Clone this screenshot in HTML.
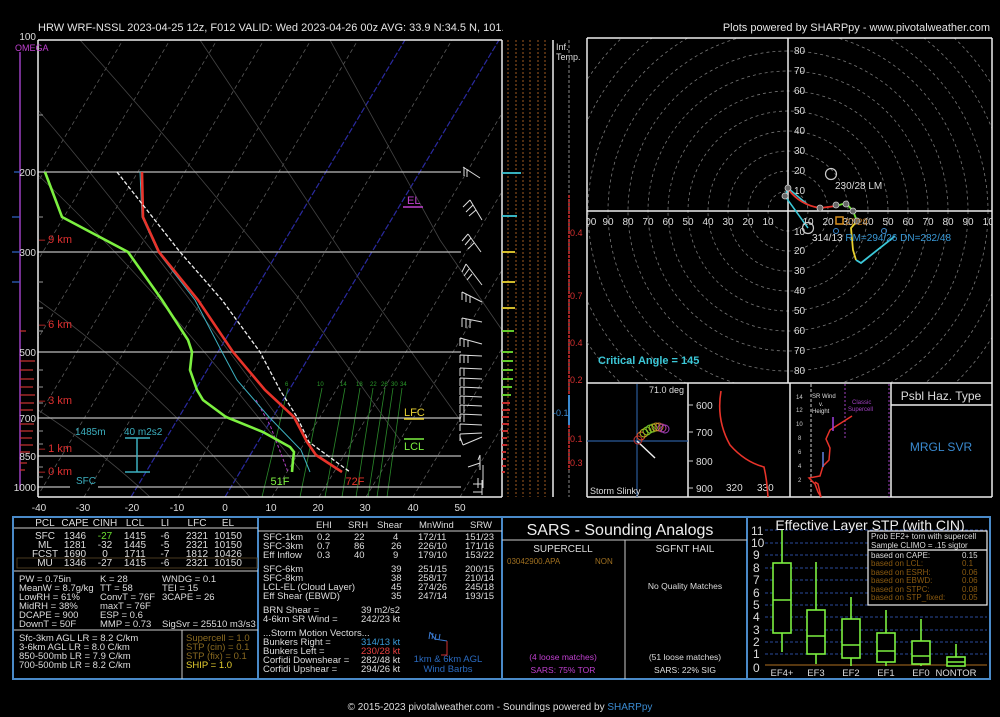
<!DOCTYPE html>
<html><head><meta charset="utf-8"><style>
html,body{margin:0;padding:0;background:#000;}
svg{display:block;font-family:"Liberation Sans",sans-serif;}
</style></head><body>
<svg width="1000" height="717" viewBox="0 0 1000 717" xmlns="http://www.w3.org/2000/svg">
<rect width="1000" height="717" fill="#000"/>
<text x="38" y="31" fill="#e4e4e4" font-size="11" font-weight="500">HRW WRF-NSSL 2023-04-25 12z, F012  VALID: Wed 2023-04-26 00z  AVG: 33.9 N:34.5 N, 101.2</text>
<rect x="503" y="18" width="90" height="16" fill="#000"/>
<text x="990" y="31" fill="#e4e4e4" font-size="11" text-anchor="end">Plots powered by SHARPpy - www.pivotalweather.com</text>

<defs><clipPath id="sk"><rect x="38" y="40" width="464" height="457"/></clipPath>
<clipPath id="hd"><rect x="587" y="38" width="405" height="345"/></clipPath></defs>
<g clip-path="url(#sk)">
 <g stroke="#5a5a5a" stroke-width="0.8" stroke-dasharray="4,3" fill="none">
  <line x1="-10" y1="497" x2="264" y2="40"/><line x1="37" y1="497" x2="311" y2="40"/>
  <line x1="84" y1="497" x2="358" y2="40"/><line x1="178" y1="497" x2="452" y2="40"/>
  <line x1="272" y1="497" x2="546" y2="40"/><line x1="319" y1="497" x2="593" y2="40"/>
  <line x1="366" y1="497" x2="640" y2="40"/><line x1="413" y1="497" x2="687" y2="40"/>
  <line x1="460" y1="497" x2="734" y2="40"/><line x1="-57" y1="497" x2="217" y2="40"/>
  <line x1="-104" y1="497" x2="170" y2="40"/><line x1="-151" y1="497" x2="123" y2="40"/>
 </g>
 <g stroke="#2a2aa0" stroke-width="1.2" stroke-dasharray="6,2" fill="none">
  <line x1="131" y1="497" x2="405" y2="40"/><line x1="225" y1="497" x2="499" y2="40"/>
 </g>
 <g stroke="#444" stroke-width="0.8" fill="none">
  <path d="M38,110 Q140,230 280,420"/><path d="M38,175 Q160,290 300,470"/>
  <path d="M38,300 Q150,380 250,497"/><path d="M38,410 Q100,450 150,497"/>
  <path d="M80,40 Q180,150 300,300 L400,440"/><path d="M200,40 Q280,160 360,280 L460,420"/>
  <path d="M330,40 Q390,150 440,240 L502,330"/>
 </g>
 <g stroke="#2a8a2a" stroke-width="0.8" fill="none">
  <line x1="288" y1="388" x2="262" y2="497"/><line x1="322" y1="388" x2="300" y2="497"/>
  <line x1="345" y1="388" x2="325" y2="497"/><line x1="360" y1="388" x2="342" y2="497"/>
  <line x1="373" y1="388" x2="356" y2="497"/><line x1="385" y1="388" x2="368" y2="497"/>
  <line x1="393" y1="388" x2="377" y2="497"/><line x1="402" y1="388" x2="387" y2="497"/>
 </g>
 <g fill="#2a9a2a" font-size="6">
  <text x="285" y="386">6</text><text x="317" y="386">10</text><text x="340" y="386">14</text><text x="356" y="386">18</text><text x="370" y="386">22</text><text x="381" y="386">26</text><text x="391" y="386">30</text><text x="400" y="386">34</text>
 </g>
</g>
<g stroke="#bbb" stroke-width="1.3">
 <line x1="38" y1="172" x2="461" y2="172"/><line x1="38" y1="252" x2="461" y2="252"/>
 <line x1="38" y1="352" x2="461" y2="352"/><line x1="38" y1="418" x2="461" y2="418"/>
 <line x1="38" y1="456" x2="461" y2="456"/><line x1="38" y1="487" x2="70" y2="487"/><line x1="98" y1="487" x2="461" y2="487"/>
</g>
<line x1="38" y1="40" x2="502" y2="40" stroke="#eee" stroke-width="1.5"/>
<line x1="38" y1="40" x2="38" y2="497" stroke="#eee" stroke-width="1.5"/>
<line x1="38" y1="497" x2="502" y2="497" stroke="#eee" stroke-width="1.5"/>
<line x1="502" y1="40" x2="502" y2="497" stroke="#eee" stroke-width="1.5"/>
<g stroke="#999" stroke-width="1"><line x1="38" y1="115" x2="43" y2="115"/><line x1="38" y1="217" x2="43" y2="217"/><line x1="38" y1="282" x2="43" y2="282"/><line x1="38" y1="308" x2="43" y2="308"/><line x1="38" y1="331" x2="43" y2="331"/><line x1="38" y1="370" x2="43" y2="370"/><line x1="38" y1="387" x2="43" y2="387"/><line x1="38" y1="403" x2="43" y2="403"/><line x1="38" y1="431" x2="43" y2="431"/><line x1="38" y1="444" x2="43" y2="444"/><line x1="38" y1="467" x2="43" y2="467"/><line x1="38" y1="477" x2="43" y2="477"/></g>
<line x1="20" y1="52" x2="20" y2="490" stroke="#9a3fbf" stroke-width="1.5"/>
<text x="15" y="51" fill="#c040d0" font-size="9">OMEGA</text>
<g stroke="#c33" stroke-width="1.2">
 <line x1="20" y1="331" x2="26" y2="331"/>
 <line x1="20" y1="361" x2="35" y2="361"/><line x1="20" y1="370" x2="33" y2="370"/><line x1="20" y1="379" x2="34" y2="379"/><line x1="20" y1="387" x2="33" y2="387"/><line x1="20" y1="395" x2="35" y2="395"/><line x1="20" y1="403" x2="34" y2="403"/><line x1="20" y1="410" x2="33" y2="410"/><line x1="20" y1="424" x2="34" y2="424"/><line x1="20" y1="431" x2="33" y2="431"/><line x1="20" y1="438" x2="32" y2="438"/><line x1="20" y1="445" x2="33" y2="445"/><line x1="20" y1="452" x2="30" y2="452"/><line x1="20" y1="463" x2="27" y2="463"/><line x1="20" y1="470" x2="25" y2="470"/>
</g>
<g stroke="#36c" stroke-width="1.2"><line x1="14" y1="172" x2="20" y2="172"/><line x1="12" y1="217" x2="20" y2="217"/><line x1="12" y1="252" x2="20" y2="252"/><line x1="12" y1="282" x2="20" y2="282"/></g>
<g fill="#ddd" font-size="10" text-anchor="end">
 <text x="36" y="40">100</text><text x="36" y="176">200</text><text x="36" y="256">300</text><text x="36" y="356">500</text><text x="36" y="422">700</text><text x="36" y="460">850</text><text x="36" y="491">1000</text>
</g>
<g fill="#e03030" font-size="11">
 <text x="39" y="243">– 9 km</text><text x="39" y="328">– 6 km</text><text x="39" y="404">– 3 km</text><text x="39" y="452">– 1 km</text><text x="39" y="475">– 0 km</text>
</g>
<g fill="#ddd" font-size="10" text-anchor="middle">
 <text x="39" y="511">-40</text><text x="83" y="511">-30</text><text x="132" y="511">-20</text><text x="177" y="511">-10</text><text x="225" y="511">0</text><text x="271" y="511">10</text><text x="318" y="511">20</text><text x="365" y="511">30</text><text x="413" y="511">40</text><text x="460" y="511">50</text>
</g>
<polyline points="256,400 270,425 288,472" stroke="#b040c0" stroke-width="1" stroke-dasharray="3,2" fill="none"/>
<polyline points="140,172 142,217 158,252 195,300 222,352 237,380 269,417 301,450 310,472" stroke="#3cb0c0" stroke-width="1" fill="none"/>
<polyline points="142,172 143,217 159,252 198,300 233,352 265,390 294,417 307,442 316,455 342,472" stroke="#e8332a" stroke-width="2.6" fill="none"/>
<polyline points="117,172 180,252 222,300 260,352 280,390 297,417 309,442 350,472" stroke="#eee" stroke-width="1.3" stroke-dasharray="4,2" fill="none"/>
<polyline points="45,172 62,217 128,252 162,300 188,340 192,352 190,370 197,390 203,400 226,417 263,432 290,447 294,452 293,460 292,472" stroke="#7cf040" stroke-width="2.6" fill="none"/>
<text x="280" y="485" fill="#7cf040" font-size="11" text-anchor="middle">51F</text>
<text x="355" y="485" fill="#e8332a" font-size="11" text-anchor="middle">72F</text>
<text x="75" y="435" fill="#3cb0c0" font-size="10">1485m</text>
<text x="124" y="435" fill="#3cb0c0" font-size="10">40 m2s2</text>
<g stroke="#3cb0c0" stroke-width="1.5"><line x1="125" y1="438" x2="150" y2="438"/><line x1="137" y1="438" x2="137" y2="472"/><line x1="125" y1="472" x2="150" y2="472"/></g>
<text x="76" y="484" fill="#3cb0c0" font-size="10">SFC</text>
<text x="404" y="416" fill="#e8d030" font-size="11">LFC</text><line x1="404" y1="419" x2="424" y2="419" stroke="#e8d030" stroke-width="1.5"/>
<line x1="404" y1="439" x2="424" y2="439" stroke="#7cf040" stroke-width="1.5"/><text x="404" y="450" fill="#7cf040" font-size="11">LCL</text>
<text x="407" y="204" fill="#c040d0" font-size="11">EL</text><line x1="403" y1="207" x2="423" y2="207" stroke="#c040d0" stroke-width="1.5"/>
<g stroke="#ddd" stroke-width="1" fill="none">
 <path d="M463,167 L480,178 M464,167 L464,176 M467,169 L467,177"/>
 <path d="M470,200 L482,220 M470,200 L463,207 M473,205 L466,212 M476,210 L469,216"/>
 <path d="M468,234 L481,252 M468,234 L462,241 M471,238 L465,245 M474,243 L468,249"/>
 <path d="M466,264 L482,285 M466,264 L462,272 M469,269 L464,276 M472,274 L467,280"/>
 <path d="M462,292 L482,302 M462,292 L462,300 M466,294 L466,302 M470,296 L470,303"/>
 <path d="M462,318 L482,322 M462,318 L462,327 M466,319 L466,328 M470,320 L470,328"/>
 <path d="M460,338 L482,344 M460,338 L460,346 M464,339 L464,347 M468,340 L468,347"/>
 <path d="M460,355 L482,356 M460,355 L460,363 M464,355 L464,363 M468,355 L468,363"/>
 <path d="M460,368 L482,369 M460,368 L460,376 M464,368 L464,376"/>
 <path d="M460,378 L482,379 M460,378 L460,386 M464,378 L464,386"/>
 <path d="M460,387 L482,388 M460,387 L460,395 M464,387 L464,395"/>
 <path d="M460,396 L482,397 M460,396 L460,404 M464,396 L464,404"/>
 <path d="M460,405 L482,406 M460,405 L460,413 M464,405 L464,413"/>
 <path d="M460,414 L482,415 M460,414 L460,422 M464,414 L464,422"/>
 <path d="M460,424 L482,425 M460,424 L460,431"/>
 <path d="M460,434 L482,433 M460,434 L460,441"/>
 <path d="M463,445 L482,437 M463,445 L460,437"/>
 <path d="M480,455 L480,470 M480,455 L478,460 M468,467 L480,463"/>
 <path d="M483,465 L483,488 M473,484 L483,484 M478,478 L478,488"/>
 <path d="M482,480 L482,495 M473,492 L482,492"/>
</g>
<g stroke="#a05a20" stroke-width="1" stroke-dasharray="2,2">
 <line x1="508" y1="40" x2="508" y2="497"/><line x1="516" y1="40" x2="516" y2="497"/><line x1="523" y1="40" x2="523" y2="497"/><line x1="530" y1="40" x2="530" y2="497"/><line x1="538" y1="40" x2="538" y2="497"/><line x1="545" y1="40" x2="545" y2="497"/>
</g>
<g stroke-width="1.8">
 <line x1="502" y1="173" x2="521" y2="173" stroke="#3cc8d8"/><line x1="502" y1="216" x2="517" y2="216" stroke="#3cc8d8"/>
 <line x1="502" y1="252" x2="515" y2="252" stroke="#e8d030"/><line x1="502" y1="282" x2="515" y2="282" stroke="#e8d030"/><line x1="502" y1="308" x2="515" y2="308" stroke="#e8d030"/>
 <line x1="502" y1="331" x2="514" y2="331" stroke="#6ce030"/><line x1="502" y1="352" x2="513" y2="352" stroke="#6ce030"/><line x1="502" y1="361" x2="513" y2="361" stroke="#6ce030"/><line x1="502" y1="370" x2="513" y2="370" stroke="#6ce030"/><line x1="502" y1="379" x2="513" y2="379" stroke="#6ce030"/><line x1="502" y1="387" x2="512" y2="387" stroke="#6ce030"/><line x1="502" y1="395" x2="511" y2="395" stroke="#6ce030"/>
 <g stroke="#d83030"><line x1="502" y1="403" x2="510" y2="403"/><line x1="502" y1="410" x2="510" y2="410"/><line x1="502" y1="417" x2="509" y2="417"/><line x1="502" y1="424" x2="509" y2="424"/><line x1="502" y1="431" x2="508" y2="431"/><line x1="502" y1="438" x2="507" y2="438"/><line x1="502" y1="445" x2="507" y2="445"/><line x1="502" y1="452" x2="506" y2="452"/><line x1="502" y1="459" x2="506" y2="459"/><line x1="502" y1="466" x2="506" y2="466"/><line x1="502" y1="472" x2="505" y2="472"/></g>
</g>
<line x1="553" y1="40" x2="553" y2="497" stroke="#eee" stroke-width="1.5"/>
<text x="556" y="50" fill="#ddd" font-size="9">Inf.</text><text x="556" y="60" fill="#ddd" font-size="9">Temp.</text>
<line x1="569" y1="40" x2="569" y2="497" stroke="#888" stroke-width="1" stroke-dasharray="3,2"/>
<line x1="569" y1="195" x2="569" y2="395" stroke="#d83030" stroke-width="1.5" stroke-dasharray="3,1"/>
<line x1="569" y1="395" x2="569" y2="425" stroke="#3a8ad0" stroke-width="2"/>
<line x1="569" y1="425" x2="569" y2="470" stroke="#d83030" stroke-width="1.5" stroke-dasharray="3,1"/>
<g fill="#d83030" font-size="9"><text x="570" y="236">0.4</text><text x="570" y="299">0.7</text><text x="570" y="346">0.4</text><text x="570" y="383">0.2</text><text x="570" y="442">0.1</text><text x="570" y="466">0.3</text></g>
<text x="553" y="416" fill="#3a8ad0" font-size="9">-0.1</text>
<line x1="587" y1="38" x2="587" y2="497" stroke="#eee" stroke-width="1.5"/>

<g clip-path="url(#hd)">
 <g stroke="#777" stroke-width="0.8" stroke-dasharray="3,3" fill="none">
  <circle cx="788" cy="211" r="20"/><circle cx="788" cy="211" r="40"/><circle cx="788" cy="211" r="60"/><circle cx="788" cy="211" r="80"/><circle cx="788" cy="211" r="100"/><circle cx="788" cy="211" r="120"/><circle cx="788" cy="211" r="140"/><circle cx="788" cy="211" r="160"/><circle cx="788" cy="211" r="180"/><circle cx="788" cy="211" r="200"/><circle cx="788" cy="211" r="220"/><circle cx="788" cy="211" r="240"/>
 </g>
 <line x1="587" y1="211" x2="992" y2="211" stroke="#eee" stroke-width="1.5"/>
 <line x1="788" y1="38" x2="788" y2="383" stroke="#eee" stroke-width="1.5"/>
 <g fill="#ddd" font-size="10" text-anchor="middle">
  <text x="588" y="225">100</text><text x="608" y="225">90</text><text x="628" y="225">80</text><text x="648" y="225">70</text><text x="668" y="225">60</text><text x="688" y="225">50</text><text x="708" y="225">40</text><text x="728" y="225">30</text><text x="748" y="225">20</text><text x="768" y="225">10</text>
  <text x="808" y="225">10</text><text x="828" y="225">20</text><text x="848" y="225">30</text><text x="868" y="225">40</text><text x="888" y="225">50</text><text x="908" y="225">60</text><text x="928" y="225">70</text><text x="948" y="225">80</text><text x="968" y="225">90</text><text x="991" y="225">100</text>
 </g>
 <g fill="#ddd" font-size="10">
  <text x="794" y="54">80</text><text x="794" y="74">70</text><text x="794" y="94">60</text><text x="794" y="114">50</text><text x="794" y="134">40</text><text x="794" y="154">30</text><text x="794" y="174">20</text><text x="794" y="194">10</text>
  <text x="794" y="235">10</text><text x="794" y="254">20</text><text x="794" y="274">30</text><text x="794" y="294">40</text><text x="794" y="314">50</text><text x="794" y="334">60</text><text x="794" y="354">70</text><text x="794" y="374">80</text>
 </g>
</g>
<line x1="587" y1="38" x2="992" y2="38" stroke="#eee" stroke-width="1.5"/>
<line x1="992" y1="38" x2="992" y2="497" stroke="#eee" stroke-width="1.5"/>
<line x1="587" y1="383" x2="992" y2="383" stroke="#eee" stroke-width="1.5"/>
<polyline points="785,196 788,188 808,205" stroke="#3cc8d8" stroke-width="1.5" fill="none"/>
<line x1="785" y1="196" x2="808" y2="228" stroke="#3cc8d8" stroke-width="1.5"/>
<path d="M786,187 L788,189 Q800,205 820,208 L836,206" stroke="#e8332a" stroke-width="1.8" fill="none"/>
<polyline points="836,206 846,203 853,211 857,221" stroke="#6ce030" stroke-width="1.8" fill="none"/>
<polyline points="857,221 851,228 853,250 856,260" stroke="#e8d030" stroke-width="1.8" fill="none"/>
<polyline points="856,260 861,263 895,236" stroke="#3cc8d8" stroke-width="1.8" fill="none"/>
<g fill="#666" stroke="#ccc" stroke-width="0.8">
 <circle cx="788" cy="188" r="3"/><circle cx="785" cy="196" r="3"/><circle cx="820" cy="208" r="3"/><circle cx="836" cy="205" r="3"/><circle cx="846" cy="204" r="3"/><circle cx="853" cy="211" r="3"/><circle cx="857" cy="221" r="3"/>
</g>
<circle cx="831" cy="174" r="5.5" stroke="#ccc" stroke-width="1.2" fill="none"/>
<circle cx="808" cy="228" r="5.5" stroke="#ccc" stroke-width="1.2" fill="none"/>
<rect x="836" y="217" width="7" height="7" stroke="#d89020" stroke-width="1.5" fill="none"/>
<text x="845" y="225" fill="#b07020" font-size="9">27/29</text>
<circle cx="836" cy="231" r="2.5" stroke="#3a8ad0" fill="none"/><circle cx="884" cy="231" r="2.5" stroke="#3a8ad0" fill="none"/>
<text x="835" y="189" fill="#ddd" font-size="10">230/28 LM</text>
<text x="812" y="241" fill="#ddd" font-size="10">314/13 <tspan fill="#3a9ad8">RM=294/26  DN=282/48</tspan></text>
<text x="598" y="364" fill="#3cc8d8" font-size="11" font-weight="bold">Critical Angle = 145</text>

<line x1="688" y1="383" x2="688" y2="497" stroke="#eee" stroke-width="1.5"/>
<line x1="790" y1="383" x2="790" y2="497" stroke="#eee" stroke-width="1.5"/>
<line x1="891" y1="383" x2="891" y2="497" stroke="#eee" stroke-width="1.5"/>
<line x1="587" y1="497" x2="992" y2="497" stroke="#eee" stroke-width="1.5"/>
<line x1="637" y1="384" x2="637" y2="497" stroke="#2a5a9a" stroke-width="1.2"/>
<line x1="587" y1="441" x2="688" y2="441" stroke="#2a5a9a" stroke-width="1.2"/>
<line x1="637" y1="441" x2="655" y2="458" stroke="#eee" stroke-width="1.5"/>
<g fill="none" stroke-width="1">
 <circle cx="638" cy="440" r="4" stroke="#c03030"/><circle cx="641" cy="436" r="4" stroke="#e05030"/><circle cx="644" cy="433" r="4" stroke="#c0c020"/><circle cx="647" cy="431" r="4" stroke="#90d020"/><circle cx="650" cy="429" r="4" stroke="#70d030"/><circle cx="653" cy="428" r="4" stroke="#90c020"/><circle cx="656" cy="427" r="4" stroke="#c0a020"/><circle cx="659" cy="427" r="4" stroke="#d08030"/><circle cx="662" cy="428" r="4" stroke="#c040a0"/><circle cx="665" cy="429" r="4" stroke="#a040c0"/>
</g>
<text x="649" y="393" fill="#ddd" font-size="9">71.0 deg</text>
<text x="590" y="494" fill="#ddd" font-size="9">Storm Slinky</text>
<g stroke="#ccc" stroke-width="1"><line x1="688" y1="405" x2="693" y2="405"/><line x1="688" y1="432" x2="693" y2="432"/><line x1="688" y1="461" x2="693" y2="461"/><line x1="688" y1="488" x2="693" y2="488"/></g>
<g fill="#ddd" font-size="10"><text x="696" y="409">600</text><text x="696" y="436">700</text><text x="696" y="465">800</text><text x="696" y="492">900</text><text x="726" y="491">320</text><text x="757" y="491">330</text></g>
<path d="M721,391 Q716,420 730,445 Q745,462 764,467 Q767,480 768,497" stroke="#e8332a" stroke-width="1.6" fill="none"/>
<line x1="811" y1="384" x2="811" y2="497" stroke="#ccc" stroke-width="1" stroke-dasharray="3,2"/>
<line x1="845" y1="384" x2="845" y2="440" stroke="#a040c0" stroke-width="1" stroke-dasharray="2,2"/>
<line x1="889" y1="384" x2="889" y2="497" stroke="#a040c0" stroke-width="1" stroke-dasharray="2,2"/>
<g fill="#ccc" font-size="6"><text x="796" y="399">14</text><text x="796" y="412">12</text><text x="796" y="426">10</text><text x="798" y="440">8</text><text x="798" y="454">6</text><text x="798" y="468">4</text><text x="798" y="482">2</text></g>
<g fill="#ddd" font-size="6"><text x="812" y="398">SR Wind</text><text x="819" y="406">v.</text><text x="812" y="413">Height</text></g>
<g fill="#a040c0" font-size="6"><text x="852" y="404">Classic</text><text x="848" y="411">Supercell</text></g>
<polyline points="852,416 830,430 826,439 830,448 829,460 823,466 820,476 809,478 815,484 818,492 821,497 818,484 815,482" stroke="#e8332a" stroke-width="1.5" fill="none"/>
<line x1="833" y1="417" x2="833" y2="431" stroke="#a040e0" stroke-width="1.5"/>
<line x1="823" y1="452" x2="823" y2="467" stroke="#6080e0" stroke-width="1.5"/>
<text x="941" y="400" fill="#ddd" font-size="12" text-anchor="middle">Psbl Haz. Type</text>
<line x1="891" y1="405" x2="992" y2="405" stroke="#eee" stroke-width="1.5"/>
<text x="941" y="451" fill="#3a8ad0" font-size="12" text-anchor="middle">MRGL SVR</text>

<rect x="13" y="517" width="977" height="162" fill="none" stroke="#4a8ac8" stroke-width="2"/>
<line x1="258" y1="517" x2="258" y2="679" stroke="#4a8ac8" stroke-width="2"/>
<line x1="502" y1="517" x2="502" y2="679" stroke="#4a8ac8" stroke-width="2"/>
<line x1="747" y1="517" x2="747" y2="679" stroke="#4a8ac8" stroke-width="2"/>
<g stroke="#ccc" stroke-width="1">
 <line x1="14" y1="528" x2="258" y2="528"/><line x1="14" y1="571" x2="258" y2="571"/><line x1="14" y1="630" x2="258" y2="630"/><line x1="182" y1="630" x2="182" y2="679"/>
 <line x1="258" y1="531" x2="502" y2="531"/><line x1="502" y1="540" x2="747" y2="540"/><line x1="625" y1="540" x2="625" y2="679"/>
</g>
<rect x="17" y="558" width="240" height="10" fill="none" stroke="#4a3a20" stroke-width="1"/>
<g fill="#ddd" font-size="10" text-anchor="middle">
 <text x="45" y="526">PCL</text><text x="75" y="526">CAPE</text><text x="105" y="526">CINH</text><text x="135" y="526">LCL</text><text x="165" y="526">LI</text><text x="197" y="526">LFC</text><text x="228" y="526">EL</text>
 <text x="45" y="539">SFC</text><text x="75" y="539">1346</text><text x="105" y="539" fill="#6ce030">-27</text><text x="135" y="539">1415</text><text x="165" y="539">-6</text><text x="197" y="539">2321</text><text x="228" y="539">10150</text>
 <text x="45" y="548">ML</text><text x="75" y="548">1281</text><text x="105" y="548">-32</text><text x="135" y="548">1445</text><text x="165" y="548">-5</text><text x="197" y="548">2321</text><text x="228" y="548">10150</text>
 <text x="45" y="557">FCST</text><text x="75" y="557">1690</text><text x="105" y="557">0</text><text x="135" y="557">1711</text><text x="165" y="557">-7</text><text x="197" y="557">1812</text><text x="228" y="557">10426</text>
 <text x="45" y="566">MU</text><text x="75" y="566">1346</text><text x="105" y="566">-27</text><text x="135" y="566">1415</text><text x="165" y="566">-6</text><text x="197" y="566">2321</text><text x="228" y="566">10150</text>
</g>
<g fill="#ddd" font-size="9.5">
 <text x="19" y="582">PW = 0.75in</text><text x="19" y="591">MeanW = 8.7g/kg</text><text x="19" y="600">LowRH = 61%</text><text x="19" y="609">MidRH = 38%</text><text x="19" y="618">DCAPE = 900</text><text x="19" y="627">DownT = 50F</text>
 <text x="100" y="582">K = 28</text><text x="100" y="591">TT = 58</text><text x="100" y="600">ConvT = 76F</text><text x="100" y="609">maxT = 76F</text><text x="100" y="618">ESP = 0.6</text><text x="100" y="627">MMP = 0.73</text>
 <text x="162" y="582">WNDG = 0.1</text><text x="162" y="591">TEI = 15</text><text x="162" y="600">3CAPE = 26</text><text x="162" y="627">SigSvr = 25510 m3/s3</text>
 <text x="19" y="641">Sfc-3km AGL LR = 8.2 C/km</text><text x="19" y="650">3-6km AGL LR = 8.0 C/km</text><text x="19" y="659">850-500mb LR = 7.9 C/km</text><text x="19" y="668">700-500mb LR = 8.2 C/km</text>
 <text x="186" y="641" fill="#8a6a20">Supercell = 1.0</text><text x="186" y="650" fill="#8a6a20">STP (cin) = 0.1</text><text x="186" y="659" fill="#8a6a20">STP (fix) = 0.1</text><text x="186" y="668" fill="#e8d030">SHIP = 1.0</text>
</g>
<g fill="#ddd" font-size="9.5">
 <text x="316" y="528">EHI</text><text x="348" y="528">SRH</text><text x="377" y="528">Shear</text><text x="419" y="528">MnWind</text><text x="470" y="528">SRW</text>
 <text x="263" y="540">SFC-1km</text><text x="263" y="549">SFC-3km</text><text x="263" y="558">Eff Inflow</text>
 <text x="317" y="540">0.2</text><text x="317" y="549">0.7</text><text x="317" y="558">0.3</text>
 <text x="354" y="540">22</text><text x="354" y="549">86</text><text x="354" y="558">40</text>
 <text x="393" y="540">4</text><text x="391" y="549">26</text><text x="393" y="558">9</text>
 <text x="418" y="540">172/11</text><text x="418" y="549">226/10</text><text x="418" y="558">179/10</text>
 <text x="465" y="540">151/23</text><text x="465" y="549">171/16</text><text x="465" y="558">153/22</text>
 <text x="263" y="572">SFC-6km</text><text x="263" y="581">SFC-8km</text><text x="263" y="590">LCL-EL (Cloud Layer)</text><text x="263" y="599">Eff Shear (EBWD)</text>
 <text x="391" y="572">39</text><text x="391" y="581">38</text><text x="391" y="590">45</text><text x="391" y="599">35</text>
 <text x="418" y="572">251/15</text><text x="418" y="581">258/17</text><text x="418" y="590">274/26</text><text x="418" y="599">247/14</text>
 <text x="465" y="572">200/15</text><text x="465" y="581">210/14</text><text x="465" y="590">245/18</text><text x="465" y="599">193/15</text>
 <text x="263" y="613">BRN Shear =</text><text x="361" y="613">39 m2/s2</text>
 <text x="263" y="622">4-6km SR Wind =</text><text x="361" y="622">242/23 kt</text>
 <text x="263" y="636">...Storm Motion Vectors...</text>
 <text x="263" y="645">Bunkers Right =</text><text x="361" y="645" fill="#3a9ad8">314/13 kt</text>
 <text x="263" y="654">Bunkers Left =</text><text x="361" y="654" fill="#e84040">230/28 kt</text>
 <text x="263" y="663">Corfidi Downshear =</text><text x="361" y="663">282/48 kt</text>
 <text x="263" y="672">Corfidi Upshear =</text><text x="361" y="672">294/26 kt</text>
</g>
<g stroke-width="1" fill="none"><path d="M430,632 L435,639 L447,641 M430,632 L429,639 M433,633 L432,639 M436,634 L435,640 M440,634 L439,640" stroke="#3a7ad0"/><path d="M447,641 L447,655 L441,655" stroke="#d03030"/></g>
<g fill="#2a6ac0" font-size="9.5" text-anchor="middle"><text x="448" y="662">1km &amp; 6km AGL</text><text x="448" y="672">Wind Barbs</text></g>
<text x="620" y="535" fill="#eee" font-size="16" text-anchor="middle">SARS - Sounding Analogs</text>
<text x="563" y="552" fill="#ddd" font-size="10" text-anchor="middle">SUPERCELL</text>
<text x="685" y="552" fill="#ddd" font-size="10" text-anchor="middle">SGFNT HAIL</text>
<text x="507" y="564" fill="#a07020" font-size="8">03042900.APA</text><text x="595" y="564" fill="#a07020" font-size="8">NON</text>
<text x="685" y="589" fill="#ddd" font-size="8.5" text-anchor="middle">No Quality Matches</text>
<text x="563" y="660" fill="#c040d0" font-size="8.5" text-anchor="middle">(4 loose matches)</text>
<text x="563" y="673" fill="#c040d0" font-size="8.5" text-anchor="middle">SARS: 75% TOR</text>
<text x="685" y="660" fill="#ddd" font-size="8.5" text-anchor="middle">(51 loose matches)</text>
<text x="685" y="673" fill="#ddd" font-size="8.5" text-anchor="middle">SARS: 22% SIG</text>
<g stroke="#2a4a9a" stroke-width="1" stroke-dasharray="3,2">
 <line x1="765" y1="530" x2="987" y2="530"/><line x1="765" y1="543" x2="987" y2="543"/><line x1="765" y1="555" x2="987" y2="555"/><line x1="765" y1="568" x2="987" y2="568"/><line x1="765" y1="580" x2="987" y2="580"/><line x1="765" y1="593" x2="987" y2="593"/><line x1="765" y1="605" x2="987" y2="605"/><line x1="765" y1="617" x2="987" y2="617"/><line x1="765" y1="630" x2="987" y2="630"/><line x1="765" y1="642" x2="987" y2="642"/><line x1="765" y1="654" x2="987" y2="654"/>
</g>
<line x1="765" y1="665" x2="987" y2="665" stroke="#b07020" stroke-width="1"/>
<g fill="#ddd" font-size="12">
 <text x="751" y="535">11</text><text x="751" y="547">10</text><text x="753" y="559">9</text><text x="753" y="572">8</text><text x="753" y="584">7</text><text x="753" y="597">6</text><text x="753" y="609">5</text><text x="753" y="621">4</text><text x="753" y="634">3</text><text x="753" y="646">2</text><text x="753" y="658">1</text><text x="753" y="672">0</text>
</g>
<text x="870" y="530" fill="#eee" font-size="14" text-anchor="middle">Effective Layer STP (with CIN)</text>
<g stroke="#7cf040" stroke-width="1.6" fill="none">
 <line x1="782" y1="530" x2="782" y2="652"/><rect x="773" y="563" width="18" height="70" fill="#000"/><line x1="773" y1="600" x2="791" y2="600"/>
 <line x1="816" y1="562" x2="816" y2="664"/><rect x="807" y="610" width="18" height="44" fill="#000"/><line x1="807" y1="636" x2="825" y2="636"/>
 <line x1="851" y1="597" x2="851" y2="666"/><rect x="842" y="619" width="18" height="39" fill="#000"/><line x1="842" y1="645" x2="860" y2="645"/>
 <line x1="886" y1="610" x2="886" y2="666"/><rect x="877" y="633" width="18" height="29" fill="#000"/><line x1="877" y1="651" x2="895" y2="651"/>
 <line x1="921" y1="619" x2="921" y2="666"/><rect x="912" y="641" width="18" height="23" fill="#000"/><line x1="912" y1="656" x2="930" y2="656"/>
 <line x1="956" y1="644" x2="956" y2="666"/><rect x="947" y="657" width="18" height="9" fill="#000"/><line x1="947" y1="662" x2="965" y2="662"/>
</g>
<g fill="#ddd" font-size="9.5" text-anchor="middle"><text x="782" y="676">EF4+</text><text x="816" y="676">EF3</text><text x="851" y="676">EF2</text><text x="886" y="676">EF1</text><text x="921" y="676">EF0</text><text x="956" y="676">NONTOR</text></g>
<rect x="868" y="531" width="119" height="74" fill="#000" stroke="#eee" stroke-width="1.2"/>
<line x1="868" y1="550" x2="987" y2="550" stroke="#eee" stroke-width="1.2"/>
<g font-size="8">
 <text x="871" y="539" fill="#ddd">Prob EF2+ torn with supercell</text>
 <text x="871" y="548" fill="#ddd">Sample CLIMO = .15 sigtor</text>
 <text x="871" y="558" fill="#ddd">based on CAPE:</text><text x="962" y="558" fill="#ddd">0.15</text>
 <g fill="#8a5a10"><text x="871" y="566">based on LCL:</text><text x="962" y="566">0.1</text><text x="871" y="575">based on ESRH:</text><text x="962" y="575">0.06</text><text x="871" y="583">based on EBWD:</text><text x="962" y="583">0.06</text><text x="871" y="592">based on STPC:</text><text x="962" y="592">0.08</text><text x="871" y="600">based on STP_fixed:</text><text x="962" y="600">0.05</text></g>
</g>
<text x="500" y="710" fill="#ddd" font-size="10" text-anchor="middle">© 2015-2023 pivotalweather.com - Soundings powered by <tspan fill="#3a8ad0">SHARPpy</tspan></text>
</svg>
</body></html>
